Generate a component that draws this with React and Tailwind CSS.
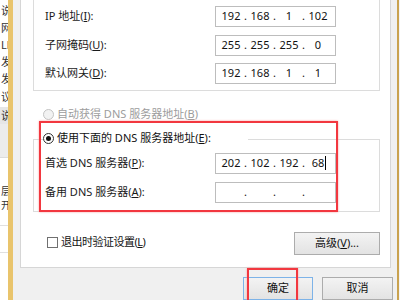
import React from "react";

const FONT = { fontFamily: '"Noto Sans", "Noto Sans CJK SC", sans-serif' };

// label with underlined access key, e.g. "IP 地址(", "I", "):"
const K = ({ pre, k, post = ")" }) => (
    <>
        {pre}(<span className="underline underline-offset-[1px]">{k}</span>{post}
    </>
);

const IpBox = ({ parts, cursor }) => (
    <div className="w-[121px] h-[21px] border border-[#bdbdbd] bg-white flex items-center pl-[2px] text-[11px] text-[#111]">
        {parts.map((p, i) => (
            <React.Fragment key={i}>
                {i > 0 && <span className="w-[3px] text-center">.</span>}
                <span className="w-[26px] text-center relative">
                    {p}
                    {cursor && i === 3 && (
                        <span className="absolute top-[1px] right-[5px] w-[1px] h-[14px] bg-black" />
                    )}
                </span>
            </React.Fragment>
        ))}
    </div>
);

const Row = ({ label, children }) => (
    <div className="flex items-center h-[21px]">
        <span className="w-[170px] text-[11px] text-[#1a1a1a]">{label}</span>
        {children}
    </div>
);

const Radio = ({ checked, disabled }) => (
    <span
        className={
            "w-[11px] h-[11px] rounded-full border flex items-center justify-center shrink-0 " +
            (disabled ? "border-[#c4c4c4] bg-[#f2f2f2]" : "border-[#333] bg-white")
        }
    >
        {checked && <span className="w-[5px] h-[5px] rounded-full bg-[#111]" />}
    </span>
);

const Button = ({ children, def }) => (
    <div
        className={
            "h-[23px] flex items-center justify-center text-[11px] text-[#111] border bg-gradient-to-b from-[#f3f3f3] to-[#e3e3e3] " +
            (def ? "border-[#7db3e8]" : "border-[#acacac]")
        }
    >
        {children}
    </div>
);

const leftChars = [
    { t: "说", h: 17 },
    { t: "网", h: 17 },
    { t: "Ll", h: 17 },
    { t: "发", h: 17 },
    { t: "发", h: 17 },
    { t: "议", h: 20, c: "text-[#3a5a9a]" },
    { t: "说", h: 17, bg: "bg-[#e6e6e6]" },
];

export default function App() {
    return (
        <div className="w-[400px] h-[300px] overflow-hidden flex bg-white" style={FONT}>
            {/* clipped window behind */}
            <div className="w-[8px] h-full overflow-hidden bg-white flex flex-col pt-[2px]">
                {leftChars.map((c, i) => (
                    <div
                        key={i}
                        className={"flex items-center text-[11px] leading-[14px] pl-[1px] whitespace-nowrap text-[#333] " + (c.c || "") + " " + (c.bg || "")}
                        style={{ height: c.h }}
                    >
                        {c.t}
                    </div>
                ))}
                <div className="h-[34px] bg-[#ececec] border-b border-[#dcdcdc]" />
                <div className="h-[26px]" />
                <div className="text-[10px] h-[14px] leading-[14px] pl-[1px] text-[#333]">层</div>
                <div className="text-[10px] h-[14px] leading-[14px] pl-[1px] text-[#333]">开</div>
                <div className="h-[14px] border-b border-[#e0e0e0]" />
                <div className="h-[27px] border-b border-[#e0e0e0]" />
            </div>
            <div className="w-[5px] h-full bg-[#e9c46c]" />

            {/* dialog */}
            <div className="w-[384px] h-full bg-[#f0f0f0] flex flex-col pl-[7px]">
                <div className="w-[371px] h-[268px] shrink-0 bg-white border-x border-b border-[#d6d6d6] relative pl-[12px] pr-[10px]">
                    {/* group 1 */}
                    <div className="border-x border-b border-[#dcdcdc] pl-[11px] pt-[6px] pb-[6px] flex flex-col gap-[7.5px]">
                        <Row label={<K pre="IP 地址" k="I" post="):" />}>
                            <IpBox parts={["192", "168", "1", "102"]} />
                        </Row>
                        <Row label={<K pre="子网掩码" k="U" post="):" />}>
                            <IpBox parts={["255", "255", "255", "0"]} />
                        </Row>
                        <Row label={<K pre="默认网关" k="D" post="):" />}>
                            <IpBox parts={["192", "168", "1", "1"]} />
                        </Row>
                    </div>

                    <div className="mt-[15px] ml-[10px] h-[16px] flex items-center gap-[3px]">
                        <Radio disabled />
                        <span className="text-[11px] text-[#9c9c9c]">
                            <K pre="自动获得 DNS 服务器地址" k="B" />
                        </span>
                    </div>

                    {/* group 2 */}
                    <div className="mt-[17px] border border-[#dcdcdc] pl-[11px] pb-[8px]">
                        <div className="-mt-[10px] -ml-[2px] w-[205px] h-[16px] bg-white flex items-center gap-[3px]">
                            <Radio checked />
                            <span className="text-[11px] text-[#111]">
                                <K pre="使用下面的 DNS 服务器地址" k="E" post="):" />
                            </span>
                        </div>
                        <div className="mt-[7px] flex flex-col gap-[8px]">
                            <Row label={<K pre="首选 DNS 服务器" k="P" post="):" />}>
                                <IpBox parts={["202", "102", "192", "68"]} cursor />
                            </Row>
                            <Row label={<K pre="备用 DNS 服务器" k="A" post="):" />}>
                                <IpBox parts={["", "", "", ""]} />
                            </Row>
                        </div>
                    </div>

                    <div className="mt-[20px] flex items-start justify-between">
                        <div className="mt-[2px] ml-[14px] flex items-center gap-[3px]">
                            <span className="w-[11px] h-[11px] border border-[#707070] bg-white" />
                            <span className="text-[11px] tracking-[-0.5px] text-[#111]">
                                <K pre="退出时验证设置" k="L" />
                            </span>
                        </div>
                        <div className="w-[86px] h-[22px]">
                            <Button>
                                <K pre="高级" k="V" post=")..." />
                            </Button>
                        </div>
                    </div>

                    {/* annotation */}
                    <div className="absolute left-[18px] top-[121px] w-[299px] h-[91px] border-2 border-[#f2373f] shadow-[0_0_2px_#f8a0a0]" />
                </div>

                <div className="flex justify-end gap-[9px] pr-[4px] pt-[9px]">
                    <div className="w-[70px] relative">
                        <Button def>确定</Button>
                        <div className="absolute left-[4px] -top-[9px] w-[51px] h-[40px] border-2 border-[#f2373f] shadow-[0_0_2px_#f8a0a0]" />
                    </div>
                    <div className="w-[71px]">
                        <Button>取消</Button>
                    </div>
                </div>
            </div>
            <div className="w-[2px] h-full bg-[#c9a24f]" />
            <div className="w-[1px] h-full bg-[#f4f4f4]" />
        </div>
    );
}
